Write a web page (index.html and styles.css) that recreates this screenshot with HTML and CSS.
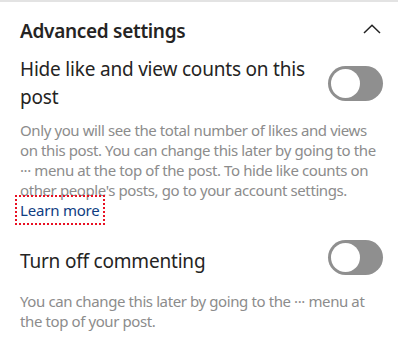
FILE: index.html
```html
<!DOCTYPE html>
<html>
<head>
<meta charset="utf-8">
<link rel="stylesheet" href="styles.css">
</head>
<body>
<div class="panel">
  <div class="header">
    <h2 class="title">Advanced settings</h2>
    <svg class="chevron" width="18" height="10" viewBox="0 0 18 10"><path d="M1 9 L9 1.2 L17 9" fill="none" stroke="#222" stroke-width="1.5"/></svg>
  </div>
  <div class="row row-first">
    <div class="label">Hide like and view counts on this post</div>
    <div class="toggle"><span class="knob"></span></div>
  </div>
  <p class="desc">Only you will see the total number of likes and views on this post. You can change this later by going to the ··· menu at the top of the post. To hide like counts on other people's posts, go to your account settings.</p>
  <a class="link" href="#">Learn more</a>
  <div class="row row-second">
    <div class="label label-offset">Turn off commenting</div>
    <div class="toggle"><span class="knob"></span></div>
  </div>
  <p class="desc desc-second">You can change this later by going to the ··· menu at the top of your post.</p>
</div>
</body>
</html>
```
FILE: styles.css
```css
html, body {
  margin: 0;
  padding: 0;
  background: #fff;
}
body {
  font-family: "Noto Sans", "Open Sans", sans-serif;
  color: #252423;
}
.panel {
  border-top: 2px solid #e3e3e3;
  padding: 0 15px 0 20px;
  display: flex;
  flex-direction: column;
  align-items: flex-start;
}
.header {
  align-self: stretch;
  display: flex;
  justify-content: space-between;
  align-items: center;
  padding-top: 16px;
  height: 26px;
}
.title {
  margin: 0;
  font-size: 19px;
  font-weight: 600;
  line-height: 26px;
  letter-spacing: -0.3px;
}
.chevron {
  margin-right: 2px;
  margin-bottom: 5px;
}
.row {
  align-self: stretch;
  display: flex;
  justify-content: space-between;
  align-items: center;
}
.row-first {
  margin-top: 11px;
}
.row-second {
  margin-top: 20px;
  align-items: flex-start;
}
.label {
  font-size: 19px;
  line-height: 28px;
  letter-spacing: -0.2px;
  max-width: 300px;
}
.label-offset {
  margin-top: 7px;
}
.toggle {
  width: 55px;
  height: 35px;
  border-radius: 18px;
  background: #8f8f8f;
  display: flex;
  align-items: center;
  padding-left: 3px;
  box-sizing: border-box;
  flex-shrink: 0;
}
.knob {
  width: 29px;
  height: 29px;
  border-radius: 50%;
  background: #fff;
}
.desc {
  margin: 9px 0 0;
  font-size: 15px;
  line-height: 20px;
  letter-spacing: -0.4px;
  color: #8c8c8c;
}
.desc-second {
  margin-top: 16px;
}
.link {
  font-size: 15px;
  line-height: 20px;
  letter-spacing: -0.2px;
  color: #0f3d82;
  text-decoration: none;
  outline: 2px dotted #e81123;
  outline-offset: 3px;
}
```
